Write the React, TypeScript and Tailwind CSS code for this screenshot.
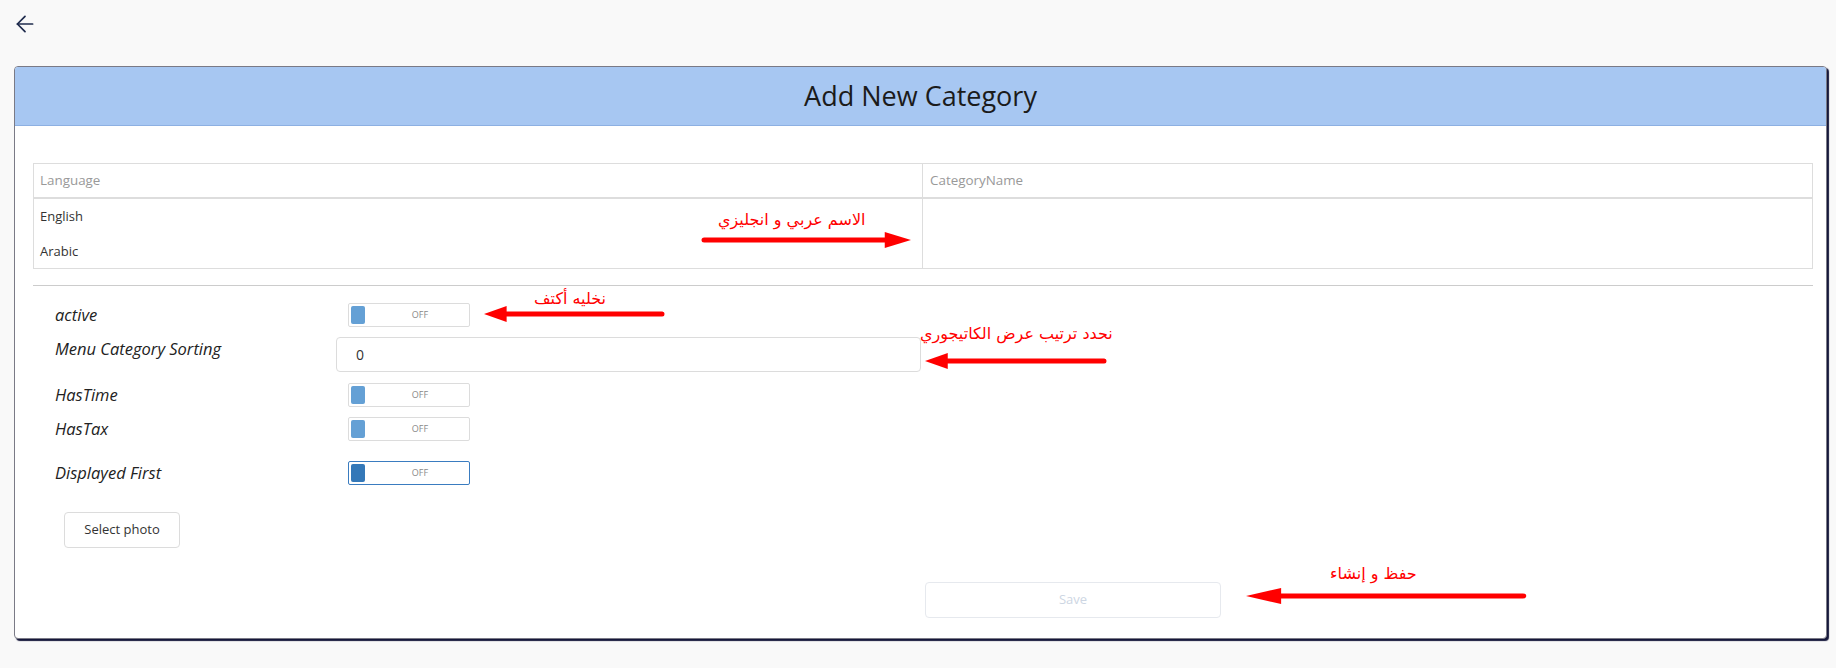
import { ArrowLeft } from 'lucide-react';

function Toggle({ focused = false }: { focused?: boolean }) {
  return (
    <div
      className={`ml-[12px] flex h-[24px] w-[122px] items-center rounded-[2px] border bg-white px-[2px] not-italic ${
        focused ? 'border-[#3a7cc0]' : 'border-[#dcdcdc]'
      }`}
    >
      <span className={`h-[18px] w-[14px] rounded-[2px] ${focused ? 'bg-[#3478b8]' : 'bg-[#64a0d5]'}`} />
      <span className="flex-1 pl-[8px] text-center text-[9px] text-[#8a8a8a]">OFF</span>
    </div>
  );
}

function RedArrow({ dir, className }: { dir: 'left' | 'right'; className: string }) {
  return (
    <svg className={className} height="18" preserveAspectRatio="none" viewBox="0 0 200 18">
      {dir === 'right' ? (
        <>
          <line x1="3" y1="9" x2="180" y2="9" stroke="#ff0000" strokeWidth="5" strokeLinecap="round" />
          <polygon points="175,1 200,9 175,17" fill="#ff0000" />
        </>
      ) : (
        <>
          <line x1="20" y1="9" x2="197" y2="9" stroke="#ff0000" strokeWidth="5" strokeLinecap="round" />
          <polygon points="25,1 0,9 25,17" fill="#ff0000" />
        </>
      )}
    </svg>
  );
}

export default function App() {
  const note = "absolute whitespace-nowrap text-[#ff0000] text-[16px] leading-none font-['DejaVu_Sans',serif]";

  return (
    <div className="relative min-h-[668px] bg-[#f9f9f9] font-['Open_Sans',sans-serif] text-[#222]">
      <div className="h-[66px] pl-[12px] pt-[11px]">
        <ArrowLeft size={26} strokeWidth={1.6} className="text-[#1f2b4d]" />
      </div>

      <div className="ml-[14px] mr-[9px] overflow-hidden rounded-[4px] border border-[#7a7a86] bg-white shadow-[2px_2px_1px_#15173a]">
        <div className="flex h-[59px] items-center justify-center border-b border-[#8db0e2] bg-[#a7c7f2]">
          <h1 className="text-[27px] text-[#1b1b1b]">Add New Category</h1>
        </div>

        <div className="pl-[18px] pr-[13px] pt-[37px] pb-[20px]">
          <div className="border border-[#dddddd]">
            <div className="grid h-[35px] grid-cols-[889px_1fr] border-b-2 border-[#dddddd] text-[13.4px] text-[#999]">
              <div className="flex items-center border-r border-[#dddddd] pl-[6px]">Language</div>
              <div className="flex items-center pl-[7px]">CategoryName</div>
            </div>
            <div className="grid h-[69px] grid-cols-[889px_1fr] text-[13px] text-[#333]">
              <div className="flex flex-col gap-[15px] border-r border-[#dddddd] pl-[6px] pt-[8px]">
                <span>English</span>
                <span>Arabic</span>
              </div>
              <div />
            </div>
          </div>

          <div className="mt-[16px] border-t border-[#cccccc]" />

          <div className="pl-[22px] pt-[17px] text-[16.5px] italic text-[#222]">
            <div className="flex h-[24px] items-center">
              <span className="w-[281px]">active</span>
              <Toggle />
            </div>
            <div className="mt-[10px] flex h-[35px] items-start">
              <span className="w-[281px]">Menu Category Sorting</span>
              <div className="flex h-[35px] w-[585px] items-center rounded-[4px] border border-[#dcdcdc] pl-[19px] text-[14px] not-italic text-[#333]">
                0
              </div>
            </div>
            <div className="mt-[11px] flex h-[24px] items-center">
              <span className="w-[281px]">HasTime</span>
              <Toggle />
            </div>
            <div className="mt-[10px] flex h-[24px] items-center">
              <span className="w-[281px]">HasTax</span>
              <Toggle />
            </div>
            <div className="mt-[20px] flex h-[24px] items-center">
              <span className="w-[281px]">Displayed First</span>
              <Toggle focused />
            </div>
            <button className="ml-[9px] mt-[27px] h-[36px] w-[116px] rounded-[4px] border border-[#dcdcdc] bg-white text-[13px] not-italic text-[#333]">
              Select photo
            </button>
          </div>

          <div className="mt-[34px] pl-[892px]">
            <button className="h-[36px] w-[296px] rounded-[4px] border border-[#e6e9ee] bg-white text-[13px] text-[#cdd6e3]">
              Save
            </button>
          </div>
        </div>
      </div>

      <span className={`${note} left-[718px] top-[212px]`}>الاسم عربي و انجليزي</span>
      <RedArrow dir="right" className="absolute left-[701px] top-[231px] w-[210px]" />

      <span className={`${note} left-[534px] top-[291px]`}>نخليه أكتف</span>
      <RedArrow dir="left" className="absolute left-[484px] top-[305px] w-[181px]" />

      <span className={`${note} left-[920px] top-[326px]`}>نحدد ترتيب عرض الكاتيجوري</span>
      <RedArrow dir="left" className="absolute left-[925px] top-[352px] w-[182px]" />

      <span className={`${note} left-[1330px] top-[566px]`}>حفظ و إنشاء</span>
      <RedArrow dir="left" className="absolute left-[1246px] top-[587px] w-[281px]" />
    </div>
  );
}
